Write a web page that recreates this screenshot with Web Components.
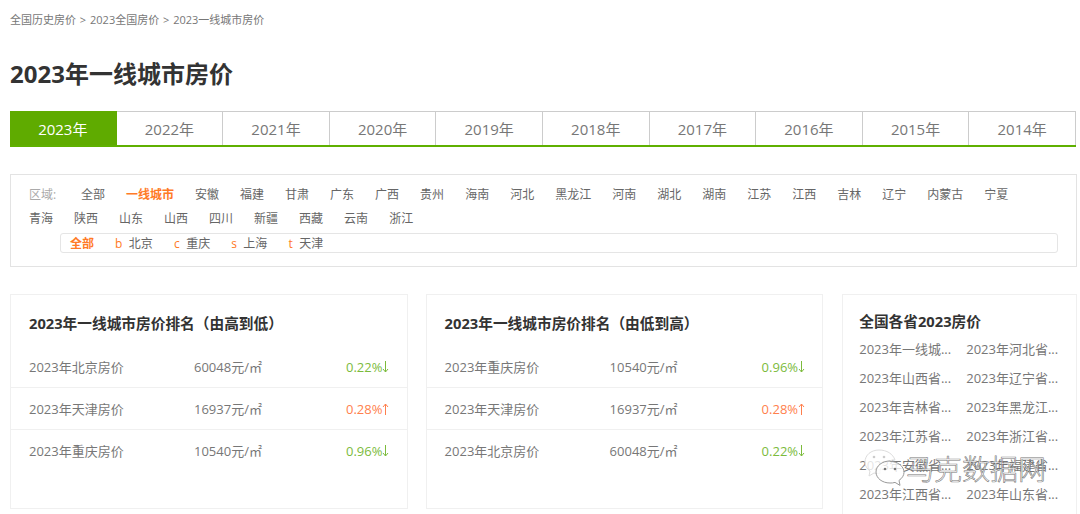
<!DOCTYPE html>
<html lang="zh">
<head>
<meta charset="utf-8">
<title>2023年一线城市房价</title>
<style>
  html, body { margin: 0; height: 514px; overflow: hidden; background: #fff; }
  body { font-family: "Open Sans", "Noto Sans CJK SC", sans-serif; color: #666; }
  price-page { width: 1080px; }
</style>
</head>
<body>
<price-page></price-page>
<script>
class YearTabs extends HTMLElement {
  connectedCallback() {
    this.attachShadow({ mode: 'open' });
    const years = [2023, 2022, 2021, 2020, 2019, 2018, 2017, 2016, 2015, 2014];
    this.shadowRoot.innerHTML = `
      <style>
        :host { display: flex; height: 36px; margin-right: 1px; box-sizing: border-box; border-bottom: 2px solid #5fb000; }
        div {
          flex: 1; display: flex; align-items: center; justify-content: center;
          box-sizing: border-box; border: 1px solid #ccc; border-width: 1px 1px 0 0;
          font-size: 15px; color: #777;
        }
        .on { background: #5fab00; color: #fff; border-color: #5fab00; }
      </style>
      ${years.map((y, i) => `<div class="${i === 0 ? 'on' : ''}">${y}年</div>`).join('')}
    `;
  }
}
customElements.define('year-tabs', YearTabs);

class RegionFilter extends HTMLElement {
  connectedCallback() {
    this.attachShadow({ mode: 'open' });
    const names = ['安徽', '福建', '甘肃', '广东', '广西', '贵州', '海南', '河北', '黑龙江', '河南', '湖北', '湖南', '江苏', '江西', '吉林', '辽宁', '内蒙古', '宁夏', '青海', '陕西', '山东', '山西', '四川', '新疆', '西藏', '云南', '浙江'];
    const subs = [['b', '北京'], ['c', '重庆'], ['s', '上海'], ['t', '天津']];
    this.shadowRoot.innerHTML = `
      <style>
        :host {
          display: block; box-sizing: border-box; height: 93px; padding: 8px 18px 0 18px;
          border: 1px solid #e3e3e3; font-size: 12px; color: #666;
        }
        .list { display: flex; flex-wrap: wrap; column-gap: 21px; line-height: 24px; margin-right: 30px; }
        .label { color: #aaa; width: 31px; }
        .on { color: #ff7a26; font-weight: 700; }
        .sub {
          display: flex; align-items: center; height: 20px; box-sizing: border-box;
          margin: 2px 0 0 31px; padding-left: 9px; border: 1px solid #e5e5e5; border-radius: 3px;
        }
        .sub .on { margin-right: 21px; }
        .sub i { font-style: normal; color: #ff7a26; margin-right: 6.5px; }
        .sub span.c { margin-right: 21px; }
      </style>
      <div class="list">
        <span class="label">区域:</span><span>全部</span><span class="on">一线城市</span>
        ${names.map(n => `<span>${n}</span>`).join('')}
      </div>
      <div class="sub">
        <span class="on">全部</span>
        ${subs.map(s => `<i>${s[0]}</i><span class="c">${s[1]}</span>`).join('')}
      </div>
    `;
  }
}
customElements.define('region-filter', RegionFilter);

class RankCard extends HTMLElement {
  connectedCallback() {
    this.attachShadow({ mode: 'open' });
    const rows = JSON.parse(this.getAttribute('rows'));
    const arrow = up => `<svg width="7" height="12" viewBox="0 0 7 12" fill="none" stroke="currentColor" stroke-width="1"><path d="${up ? 'M3.5 12V1M1 4l2.5-3L6 4' : 'M3.5 0v11M1 8l2.5 3L6 8'}"/></svg>`;
    this.shadowRoot.innerHTML = `
      <style>
        :host {
          display: block; box-sizing: border-box; height: 215px; width: 398px;
          border: 1px solid #f0f0f0; padding-top: 18px; font-size: 13px; color: #777;
        }
        h3 { margin: 0 0 13px 18px; font-size: 14.7px; line-height: 20px; color: #333; font-weight: 700; }
        .row {
          display: grid; grid-template-columns: 165px 152px 1fr; align-items: center;
          height: 42px; padding-left: 18px; border-bottom: 1px solid #f0f0f0; box-sizing: border-box;
        }
        .row:last-child { border-bottom-color: transparent; }
        .chg { display: flex; align-items: center; }
        .down { color: #7cbb3c; }
        .up { color: #ff7f4d; }
      </style>
      <h3>${this.getAttribute('heading')}</h3>
      ${rows.map(r => `
        <div class="row">
          <span>2023年${r[0]}房价</span>
          <span>${r[1]}元/㎡</span>
          <span class="chg ${r[3]}">${r[2]}${arrow(r[3] === 'up')}</span>
        </div>`).join('')}
    `;
  }
}
customElements.define('rank-card', RankCard);

class ProvinceCard extends HTMLElement {
  connectedCallback() {
    this.attachShadow({ mode: 'open' });
    const names = ['一线城', '河北省', '山西省', '辽宁省', '吉林省', '黑龙江', '江苏省', '浙江省', '安徽省', '福建省', '江西省', '山东省'];
    this.shadowRoot.innerHTML = `
      <style>
        :host {
          display: block; box-sizing: border-box; width: 235px; height: 240px; padding: 16px 0 0 16px;
          border: 1px solid #f0f0f0; font-size: 13px; color: #777;
        }
        h3 { margin: 0 0 4px; font-size: 14.7px; line-height: 20px; color: #333; font-weight: 700; }
        .grid { display: grid; grid-template-columns: 107px 107px; grid-auto-rows: 29px; }
        span { line-height: 29px; white-space: nowrap; }
      </style>
      <h3>全国各省2023房价</h3>
      <div class="grid">
        ${names.map(n => `<span>2023年${n}...</span>`).join('')}
      </div>
    `;
  }
}
customElements.define('province-card', ProvinceCard);

class WechatMark extends HTMLElement {
  connectedCallback() {
    this.attachShadow({ mode: 'open' });
    this.shadowRoot.innerHTML = `
      <style>
        :host { display: flex; align-items: center; position: absolute; left: 864px; top: 447px; }
        svg { display: block; }
        span {
          font-size: 28px; line-height: 36px; color: rgba(255,255,255,.75);
          -webkit-text-stroke: .6px rgba(90,90,90,.85);
          font-family: "Noto Sans CJK SC", sans-serif; font-weight: 300;
        }
      </style>
      <svg width="42" height="42" viewBox="0 0 42 42" fill="rgba(255,255,255,.8)" stroke="#bbb" stroke-width="1">
        <path d="M15 3C7 3 1 8 1 15c0 4 2 7 5 9l-1 5 5-3c2 .6 4 .8 6 .6C15 21 20 13 31 13 29 7 23 3 15 3z" stroke="#ddd"/>
        <path d="M26 14c-8 0-14 5-14 11s6 11 14 11c2 0 3 0 5-.6l5 3-1-5c3-2 5-5 5-8 0-6-6-11-14-11z" stroke="#999"/>
        <circle cx="10" cy="10" r="1.3" fill="#ccc" stroke="none"/><circle cx="20" cy="10" r="1.3" fill="#ccc" stroke="none"/>
        <circle cx="21" cy="22" r="1.3" fill="#777" stroke="none"/><circle cx="31" cy="22" r="1.3" fill="#777" stroke="none"/>
      </svg>
      <span>马克数据网</span>
    `;
  }
}
customElements.define('wechat-mark', WechatMark);

class PricePage extends HTMLElement {
  connectedCallback() {
    this.attachShadow({ mode: 'open' });
    const high = [['北京', '60048', '0.22%', 'down'], ['天津', '16937', '0.28%', 'up'], ['重庆', '10540', '0.96%', 'down']];
    const low = [['重庆', '10540', '0.96%', 'down'], ['天津', '16937', '0.28%', 'up'], ['北京', '60048', '0.22%', 'down']];
    this.shadowRoot.innerHTML = `
      <style>
        :host { display: block; box-sizing: border-box; height: 514px; padding: 12px 3px 0 10px; overflow: hidden; position: relative; }
        .crumb { font-size: 11px; line-height: 16px; color: #777; }
        .crumb b { font-weight: 400; margin: 0 1px; }
        h1 { margin: 27px 0 19px; font-size: 24px; line-height: 37px; color: #333; font-weight: 700; }
        region-filter { margin-top: 27px; }
        .cards { display: flex; margin-top: 27px; align-items: flex-start; }
        rank-card { margin-right: 18px; }
        province-card { margin-left: 1px; }
      </style>
      <div class="crumb">全国历史房价<b> &gt; </b>2023全国房价<b> &gt; </b>2023一线城市房价</div>
      <h1>2023年一线城市房价</h1>
      <year-tabs></year-tabs>
      <region-filter></region-filter>
      <div class="cards">
        <rank-card heading="2023年一线城市房价排名（由高到低）" rows='${JSON.stringify(high)}'></rank-card>
        <rank-card heading="2023年一线城市房价排名（由低到高）" rows='${JSON.stringify(low)}'></rank-card>
        <province-card></province-card>
      </div>
      <wechat-mark></wechat-mark>
    `;
  }
}
customElements.define('price-page', PricePage);
</script>
</body>
</html>
